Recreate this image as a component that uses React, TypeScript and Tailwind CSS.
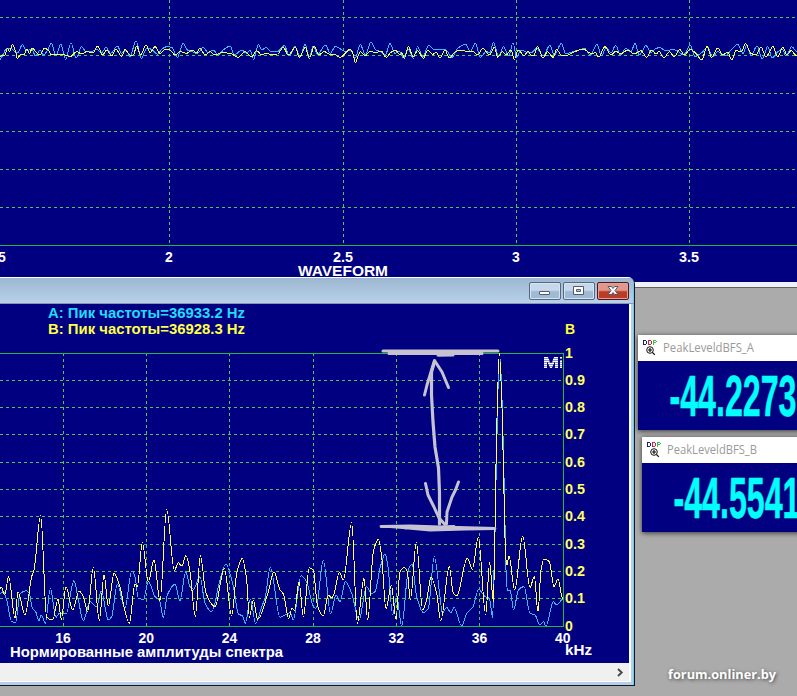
import React from "react";

type Pt = [number, number];

// Samples are stored in thirds of a pixel, relative to the start of each segment.
const seg = (ox: number, oy: number, pts: Pt[]): Pt[] => pts.map(([x, y]) => [ox + x / 3, oy + y / 3]);

// Joins samples with curves that flatten at local extrema.
function curve(pts: Pt[]): string {
  const m = pts.map((p, i) => {
    if (i === 0 || i === pts.length - 1) return 0;
    const a = (p[1] - pts[i - 1][1]) / (p[0] - pts[i - 1][0]);
    const b = (pts[i + 1][1] - p[1]) / (pts[i + 1][0] - p[0]);
    return a * b <= 0 ? 0 : (2 * a * b) / (a + b);
  });
  let d = `M${pts[0][0]} ${pts[0][1]}`;
  for (let i = 1; i < pts.length; i++) {
    const [x0, y0] = pts[i - 1];
    const [x1, y1] = pts[i];
    const h = (x1 - x0) / 3;
    d += `C${x0 + h} ${y0 + m[i - 1] * h} ${x1 - h} ${y1 - m[i] * h} ${x1} ${y1}`;
  }
  return d;
}

const spectrumB: Pt[] = [
  ...seg(0, 490, [[0,295],[5,292],[14,315],[26,260],[45,385],[54,305],[75,375],[95,260],[102,240],[122,76],[140,382],[158,390],[174,328],[184,388],[198,290],[218,360],[237,303],[250,320],[263,365],[280,232],[298,392],[312,255],[325,348],[342,250],[360,290],[373,355],[388,400],[405,282],[412,290],[427,157],[445,275],[462,210],[480,332],[500,58],[523,242],[535,218],[545,228],[558,197]]),
  ...seg(190, 490, [[0,245],[16,380],[31,197],[48,310],[75,350],[103,235],[125,378],[140,250],[157,205],[170,270],[178,382],[190,330],[203,388],[235,305],[252,245],[270,300],[280,312],[296,385],[306,355],[314,362],[327,275],[340,380],[358,233],[370,240],[382,345],[400,378],[415,315],[425,323],[432,312],[448,247],[460,270],[485,98],[502,400],[522,265],[533,390],[550,185],[565,148]]),
  ...seg(380, 490, [[5,200],[18,357],[34,285],[48,388],[60,245],[73,233],[82,245],[91,330],[109,157],[128,360],[140,330],[153,262],[170,310],[182,393],[208,230],[220,310],[230,318],[262,205],[277,238],[295,142],[317,375],[329,218],[340,335],[345,115],[347,-27],[358,-411],[366,-245],[373,55],[377,200],[381,225],[387,198],[404,300],[428,138],[450,292],[463,260],[474,365],[483,240],[492,207],[508,215],[522,290],[534,267],[548,325]]),
];

const spectrumA: Pt[] = [
  ...seg(0, 490, [[0,310],[10,305],[20,330],[35,395],[47,397],[60,312],[78,302],[88,310],[97,355],[107,365],[117,392],[124,375],[136,400],[151,295],[168,382],[178,370],[198,372],[222,272],[235,330],[250,392],[270,335],[290,350],[304,303],[325,390],[335,380],[352,283],[375,355],[395,243],[405,260],[415,325],[430,328],[445,275],[465,320],[478,330],[490,382],[502,315],[525,283],[540,332],[557,245]]),
  ...seg(190, 490, [[0,290],[10,298],[30,260],[45,340],[65,365],[90,270],[107,222],[130,290],[145,372],[158,378],[166,400],[181,328],[197,400],[215,350],[225,325],[241,233],[270,382],[300,368],[310,390],[333,257],[350,275],[370,350],[378,355],[400,210],[422,372],[438,315],[450,335],[466,275],[485,310],[507,390],[530,290],[545,310],[555,305]]),
  ...seg(380, 490, [[0,235],[15,192],[24,230],[38,375],[50,318],[65,408],[85,240],[96,222],[110,320],[130,368],[145,355],[163,200],[180,320],[187,370],[200,352],[212,368],[222,352],[245,408],[260,370],[278,352],[296,298],[315,320],[328,325],[338,382],[342,240],[346,90],[348,-27],[359,-408],[367,-245],[374,55],[378,240],[382,300],[390,300],[401,360],[415,300],[432,290],[450,370],[465,375],[480,405],[490,395],[498,408],[520,335],[530,345],[548,328]]),
];

const waveB: Pt[] = [
  ...seg(0, 0, [[0,170],[6,165],[14,168],[22,145],[28,155],[38,133],[48,160],[52,177],[62,162],[72,165],[80,148],[88,160],[97,145],[110,158],[120,165],[133,145],[145,150],[155,165],[175,162],[190,163],[210,170],[230,155],[245,162],[260,155],[280,158],[293,138],[308,165],[320,150],[335,168],[348,148],[365,170],[375,148],[390,165],[400,165],[410,138],[422,165],[438,135],[450,158],[465,140],[480,160],[495,148],[510,150],[525,165],[540,155],[560,160],[575,150],[590,158],[600,145],[615,165],[630,155],[645,165],[665,158],[690,160],[715,172],[735,155],[755,170],[770,152],[785,165]]),
  ...seg(266, 0, [[0,160],[15,163],[35,162],[52,142],[67,165],[88,142],[100,173],[118,142],[130,175],[145,138],[158,165],[175,155],[190,162],[205,163],[222,172],[238,160],[252,148],[260,158],[268,187],[283,155],[298,168],[310,155],[330,157],[346,153],[360,172],[375,157],[388,150],[402,165],[408,158],[415,176],[427,139],[441,170],[455,152],[472,175],[485,150],[500,163],[510,157],[522,174],[537,150],[550,174],[568,155],[585,150],[605,155],[622,155],[635,165],[650,145],[670,165],[685,142],[695,172],[710,155],[720,165],[735,150],[745,178],[757,150],[775,168],[785,153]]),
  ...seg(531, 0, [[0,165],[8,168],[20,140],[36,174],[50,155],[66,172],[77,148],[90,165],[105,167],[125,158],[145,150],[158,147],[170,155],[183,162],[193,158],[203,171],[222,140],[240,165],[255,153],[268,162],[290,150],[310,162],[330,152],[347,172],[362,150],[375,162],[385,154],[394,170],[400,172],[415,155],[430,170],[446,148],[460,165],[478,148],[495,160],[512,180],[528,140],[542,172],[560,144],[575,165],[590,156],[602,180],[615,152],[632,155],[643,130],[660,160],[675,165],[690,142],[705,170],[726,140],[740,170],[756,142],[768,165],[780,152],[798,168]]),
];

const waveA: Pt[] = [
  ...seg(0, 0, [[0,178],[10,162],[20,145],[32,145],[45,155],[54,158],[67,134],[80,152],[95,148],[107,168],[120,150],[130,165],[142,152],[154,130],[168,168],[182,132],[197,178],[213,128],[228,174],[245,140],[258,155],[275,155],[290,148],[305,158],[318,142],[332,160],[352,138],[365,160],[378,150],[390,170],[408,122],[424,175],[440,145],[455,148],[472,163],[485,148],[500,140],[515,142],[532,172],[550,130],[562,150],[575,155],[592,160],[610,142],[624,158],[640,150],[655,165],[672,148],[690,138],[703,165],[725,150],[740,160],[750,150],[761,178],[775,134],[785,150]]),
  ...seg(266, 0, [[0,142],[15,155],[32,156],[55,137],[70,168],[87,140],[103,170],[117,133],[130,170],[142,138],[155,163],[178,135],[193,160],[208,139],[225,148],[240,155],[255,150],[267,175],[283,134],[298,165],[315,127],[330,150],[345,155],[358,165],[372,131],[387,160],[400,155],[412,174],[427,148],[442,175],[455,140],[470,170],[488,136],[502,147],[520,147],[540,150],[558,172],[575,145],[600,133],[612,155],[628,130],[643,172],[660,155],[672,158],[682,127],[698,170],[712,140],[728,168],[741,128],[752,172],[765,150],[785,158]]),
  ...seg(531, 0, [[0,158],[18,145],[36,168],[57,136],[70,165],[91,130],[105,162],[125,155],[145,150],[160,145],[178,165],[198,134],[212,168],[225,142],[240,158],[254,136],[268,165],[285,145],[300,155],[312,130],[325,165],[345,137],[360,158],[375,145],[388,143],[404,153],[425,148],[440,153],[457,165],[478,136],[492,170],[512,158],[530,142],[545,170],[560,155],[582,168],[600,150],[620,133],[636,160],[647,135],[660,167],[678,138],[694,177],[710,140],[724,174],[740,155],[755,148],[765,168],[782,140],[798,155]]),
];

type LabelProps = {
  x: number;
  y: number;
  children: React.ReactNode;
  w?: number;
  fill?: string;
  anchor?: "start" | "middle" | "end";
};

function Label({ x, y, children, w, fill = "#fff", anchor = "start" }: LabelProps) {
  return (
    <text x={x} y={y} fill={fill} textAnchor={anchor} textLength={w} lengthAdjust="spacingAndGlyphs">
      {children}
    </text>
  );
}

const plotText = "block font-['Liberation_Sans',Arial,sans-serif] text-[14px] font-bold";
const gridStroke = "#48cc50";
const axisStroke = "#20b83c";

function WaveformPlot() {
  return (
    <svg width="797" height="282" viewBox="0 0 797 282" className={plotText}>
      <g stroke={gridStroke} strokeDasharray="3 3" shapeRendering="crispEdges">
        {[17.5, 55.5, 93.5, 131.5, 169.5, 207.5].map((y) => (
          <line key={y} x1="0" x2="797" y1={y} y2={y} />
        ))}
        {[169.5, 343.5, 516.5, 689.5].map((x) => (
          <line key={x} x1={x} x2={x} y1="0" y2="245" />
        ))}
      </g>
      <line x1="0" x2="797" y1="245.5" y2="245.5" stroke={axisStroke} shapeRendering="crispEdges" />
      <g fill="none" shapeRendering="crispEdges">
        <path d={curve(waveA)} stroke="#38b8f4" />
        <path d={curve(waveB)} stroke="#f0ff50" />
      </g>
      <Label x={-2} y={262}>5</Label>
      <Label x={169} y={262} anchor="middle">2</Label>
      <Label x={343} y={262} anchor="middle" w={20}>2.5</Label>
      <Label x={516} y={262} anchor="middle">3</Label>
      <Label x={689} y={262} anchor="middle" w={20}>3.5</Label>
      <Label x={298} y={276} w={90}>WAVEFORM</Label>
    </svg>
  );
}

const levels = ["0.9", "0.8", "0.7", "0.6", "0.5", "0.4", "0.3", "0.2", "0.1", "0"];
const levelY = [380, 407, 434, 462, 489, 516, 544, 571, 598, 626];

function SpectrumPlot() {
  return (
    <svg width="629" height="359" viewBox="0 304 629 359" className={plotText}>
      <g stroke={gridStroke} strokeDasharray="3 3" shapeRendering="crispEdges">
        {levelY.slice(0, 9).map((y) => (
          <line key={y} x1="0" x2="563" y1={y + 0.5} y2={y + 0.5} />
        ))}
        {[63.5, 146.5, 229.5, 313.5, 396.5, 479.5].map((x) => (
          <line key={x} x1={x} x2={x} y1="353" y2="626" />
        ))}
      </g>
      <path d="M0 353.5H563.5V626.5H0" fill="none" stroke={axisStroke} shapeRendering="crispEdges" />
      <g fill="none" shapeRendering="crispEdges">
        <path d={curve(spectrumA)} stroke="#38b8f4" />
        <path d={curve(spectrumB)} stroke="#ffff58" />
      </g>

      {/* striped maker's mark */}
      <path d="M544 357h4l3 7 3-7h4v11h-3v-7l-3 7h-2l-3-7v7h-3zM560 360h2v8h-2zM560 357h2v2h-2z" fill="#8f8fce" />
      <path
        d="M544 357.5h4M554 357.5h4M560 357.5h2M544 359.5h5M553 359.5h5M544 361.5h5M553 361.5h5M560 361.5h2M544 363.5h3M548 363.5h6M555 363.5h3M560 363.5h2M544 365.5h3M549 365.5h4M555 365.5h3M560 365.5h2M544 367.5h3M550 367.5h2M555 367.5h3M560 367.5h2"
        stroke="#fff"
        shapeRendering="crispEdges"
      />

      <g fill="none" stroke="#c5c3d2" strokeWidth="3" strokeLinecap="round" strokeLinejoin="round">
        <path d="M383 351H498M389 353.5H482M438 355.3L453 355" />
        <path d="M424.5 395L427 385L434.5 360.5L442 372L448.5 387.5" />
        <path d="M434.5 362L431.5 372V395L433 422L435 447L438.5 468L439.5 493V524" strokeWidth="3.2" />
        <path d="M425.5 483.5L428 495L434 507L439 518L445 524.5M446.5 524L447 512L452 497L455.5 490L458.5 482" />
        <path d="M381 526.5L410 526L440 527L495 528.5L465 529L430 530L403 527.5L390 526.5M405 528L454 526.5" strokeWidth="2.8" />
      </g>

      <Label x={48} y={318} w={197} fill="#22dcff">A: Пик частоты=36933.2 Hz</Label>
      <Label x={48} y={334} w={197} fill="#ffff48">B: Пик частоты=36928.3 Hz</Label>
      <Label x={565} y={334} fill="#ffff38">B</Label>
      <Label x={565} y={358} fill="#ffff60">1</Label>
      {levels.map((level, i) => (
        <Label key={level} x={565} y={levelY[i] + 5} w={level === "0" ? undefined : 20} fill="#ffff60">
          {level}
        </Label>
      ))}
      {["16", "20", "24", "28", "32", "36", "40"].map((f, i) => (
        <Label key={f} x={63 + i * 83.3} y={643} anchor="middle" w={15.5}>
          {f}
        </Label>
      ))}
      <Label x={10} y={657} w={273}>Нормированные амплитуды спектра</Label>
      <Label x={565} y={655} w={27}>kHz</Label>
    </svg>
  );
}

const captionButton =
  "h-[18px] w-8 rounded-[2px] border border-[#56677f] bg-linear-to-b from-[#c6d8ea] from-45% to-[#9fbad4] to-55% shadow-[inset_0_0_0_1px_#d6e4f2]";

function SpectrumWindow() {
  return (
    <section className="absolute top-[277px] left-0 flex h-[409px] w-[635px] flex-col overflow-hidden rounded-tr-[7px] border-r border-b border-[#10182c] bg-[#b5cfe8]">
      <header className="flex h-[27px] shrink-0 items-start justify-end gap-[2px] border-t border-r border-b border-t-white border-r-[#6ccbe4] border-b-[#8795b0] bg-linear-to-b from-[#9cb7d0] to-[#b9d1ea] pt-[4px] pr-[4px]">
        <button className={captionButton} aria-label="Minimize">
          <svg width="30" height="16" viewBox="0 0 30 16" className="block">
            <rect x="9.5" y="8.5" width="10" height="3" rx=".5" fill="#fff" stroke="#53596a" />
          </svg>
        </button>
        <button className={captionButton} aria-label="Maximize">
          <svg width="30" height="16" viewBox="0 0 30 16" className="block">
            <path d="M9.5 3.5h10v8h-10zM12.5 6.5v2h4v-2z" fill="#fff" fillRule="evenodd" stroke="#53596a" />
          </svg>
        </button>
        <button
          className="h-[18px] w-8 rounded-[2px] border border-[#4a1724] bg-linear-to-b from-[#df9889] from-45% to-[#bc3b26] to-55% shadow-[inset_0_0_0_1px_#e6a093]"
          aria-label="Close"
        >
          <svg width="30" height="16" viewBox="0 0 30 16" className="block">
            <path d="M10 3.5h3.5L15 5.5l1.5-2H20L17 7.5l3 4h-3.5L15 9.5l-1.5 2H10l3-4z" fill="#fff" stroke="#53596a" />
          </svg>
        </button>
      </header>
      <div className="flex min-h-0 flex-1 flex-col border-r border-[#6ccbe4] pr-[2px] pb-[3px]">
        <div className="flex min-h-0 flex-1 flex-col border-r-2 border-b border-white bg-[#000080]">
          <SpectrumPlot />
          <div className="flex flex-1 items-center justify-end bg-[#f0f0f0] pr-[5px]">
            <svg width="7" height="9" viewBox="0 0 7 9" className="block">
              <path d="M1 1L4.7 4.5L1 8" fill="none" stroke="#484848" strokeWidth="1.9" />
            </svg>
          </div>
        </div>
      </div>
    </section>
  );
}

function MeterIcon() {
  return (
    <svg width="15" height="17" viewBox="0 0 15 17" fill="none" shapeRendering="crispEdges">
      <path d="M.5 1v5M1 1.5h2M1 5.5h2M3.5 2v3" stroke="#142080" />
      <path d="M5.5 1v5M6 1.5h2M6 5.5h2M8.5 2v3" stroke="#d42040" />
      <path d="M10.5 1v5M11 1.5h2M11 3.5h2M13.5 2v1" stroke="#30c840" />
      <g stroke="#101010" shapeRendering="auto">
        <circle cx="7" cy="11" r="3.3" fill="#fff" />
        <path d="M5 11h4M7 9v4M9.5 13.5l2.3 2.3" strokeWidth="1.2" />
      </g>
    </svg>
  );
}

function Meter({ title, value, place }: { title: string; value: string; place: string }) {
  return (
    <section className={`absolute flex w-[180px] flex-col shadow-[0_1px_5px_rgba(0,0,0,0.7)] ${place}`}>
      <header className="flex h-[26px] shrink-0 items-start bg-white pt-[4px] pl-[5px]">
        <MeterIcon />
        <svg width="110" height="18" className="ml-[5px] block font-['Open_Sans','Noto_Sans',sans-serif] text-[12px]">
          <text x="0" y="13" fill="#9a9a9a" textLength={title.endsWith("A") ? 91 : 90} lengthAdjust="spacingAndGlyphs">
            {title}
          </text>
        </svg>
      </header>
      <div className="flex-1 bg-[#000080]">
        <svg width="180" height="69" className="block font-['Liberation_Sans',Arial,sans-serif] text-[58px] font-bold">
          <text x="31.5" y="55" fill="#00ffff" stroke="#00ffff" strokeWidth="0.5" textLength="127" lengthAdjust="spacingAndGlyphs">
            {value}
          </text>
        </svg>
      </div>
    </section>
  );
}

export default function App() {
  return (
    <main className="relative h-[696px] w-[797px] overflow-hidden bg-[#ababab]">
      <section className="flex h-[288px] flex-col border-b border-[#606060] bg-[#f0f0fa]">
        <div className="h-[282px] bg-[#000080]">
          <WaveformPlot />
        </div>
      </section>
      <Meter title="PeakLeveldBFS_A" value="-44.2273" place="left-[638px] top-[335px] h-[95px]" />
      <Meter title="PeakLeveldBFS_B" value="-44.5541" place="left-[642px] top-[437px] h-[95px]" />
      <SpectrumWindow />
      <div className="absolute top-[667px] left-[667px] font-['Open_Sans','Noto_Sans',sans-serif] text-[13px] leading-4 font-bold text-white [text-shadow:1px_1px_4px_rgba(0,0,0,0.6)]">
        <svg width="125" height="20" className="block overflow-visible">
          <text x="1" y="12" fill="#fff" textLength="108" lengthAdjust="spacingAndGlyphs">
            forum.onliner.by
          </text>
        </svg>
      </div>
    </main>
  );
}
